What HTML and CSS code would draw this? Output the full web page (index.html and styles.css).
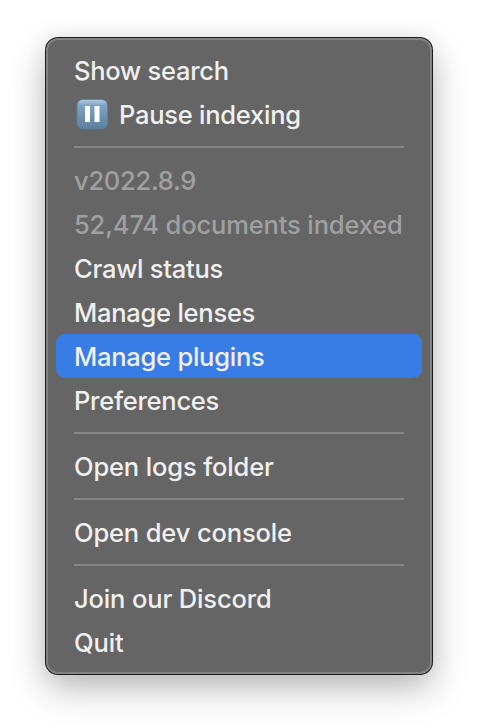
FILE: index.html
```html
<!DOCTYPE html>
<html lang="en">
<head>
<meta charset="utf-8">
<title>Tray menu</title>
<link rel="stylesheet" href="styles.css">
</head>
<body>
<nav class="menu">
  <div class="item">Show search</div>
  <div class="item"><svg class="pause" viewBox="0 0 32 32"><defs><linearGradient id="g" x1="0" y1="0" x2="0" y2="1"><stop offset="0" stop-color="#b4cce0"/><stop offset=".2" stop-color="#7fa3c4"/><stop offset="1" stop-color="#5c7f9e"/></linearGradient></defs><rect x="1" y="1.5" width="30.5" height="29.5" rx="6" fill="url(#g)" stroke="#5a80a4" stroke-width=".8"/><path d="M9 8h5v16H9zM18.5 8h5v16h-5z" fill="#fff"/></svg>Pause indexing</div>
  <hr class="separator">
  <div class="item disabled">v2022.8.9</div>
  <div class="item disabled roomy">52,474 documents indexed</div>
  <div class="item">Crawl status</div>
  <div class="item">Manage lenses</div>
  <div class="item selected">Manage plugins</div>
  <div class="item">Preferences</div>
  <hr class="separator">
  <div class="item roomy">Open logs folder</div>
  <hr class="separator">
  <div class="item roomy">Open dev console</div>
  <hr class="separator">
  <div class="item roomy">Join our Discord</div>
  <div class="item roomy">Quit</div>
</nav>
</body>
</html>
```
FILE: styles.css
```css
* { box-sizing: border-box; }
body {
  margin: 0;
  padding: 38px 46px;
  height: 728px;
  overflow: hidden;
  background: #fff;
  font: 500 25.5px/44px Inter, sans-serif;
  letter-spacing: -.25px;
  color: #f0f0f0;
}
.menu {
  width: 386px;
  height: 636px;
  padding: 8px;
  border: 2px solid #838383;
  border-radius: 12px;
  background: #656565;
  box-shadow: 0 0 0 1px #1c1c1c, 0 14px 36px rgba(0, 0, 0, .28), 0 0 24px rgba(0, 0, 0, .06);
}
.item {
  display: flex;
  align-items: center;
  width: 366px;
  height: 44px;
  padding: 2px 0 0 18px;
  border-radius: 9px;
  white-space: nowrap;
}
.roomy { letter-spacing: -.14px; }
.disabled { color: #a0a0a0; }
.selected { background: #387de5; }
.separator {
  height: 2px;
  margin: 10px 18px;
  border: 0;
  background: #868686;
}
.pause { width: 32px; height: 32px; margin: -2px 11px 0 2px; }
```
